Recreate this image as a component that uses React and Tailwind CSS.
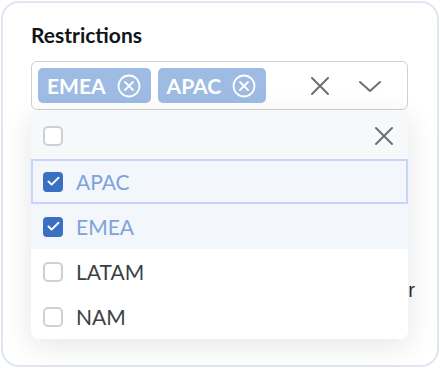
import { Check } from 'lucide-react';

const options = [
  { label: 'APAC', checked: true, active: true },
  { label: 'EMEA', checked: true },
  { label: 'LATAM', checked: false },
  { label: 'NAM', checked: false },
];

function Cross({ size = 20, stroke = 2, className = '' }) {
  return (
    <svg width={size} height={size} viewBox="0 0 20 20" className={className}>
      <path d="M2 2 L18 18 M18 2 L2 18" stroke="currentColor" strokeWidth={stroke} strokeLinecap="round" fill="none" />
    </svg>
  );
}

function Chevron() {
  return (
    <svg width="24" height="14" viewBox="0 0 24 14" className="text-[#6b6f76]">
      <path d="M2 3 L12 12 L22 3" stroke="currentColor" strokeWidth="2" strokeLinecap="round" strokeLinejoin="round" fill="none" />
    </svg>
  );
}

function CircleCross() {
  return (
    <svg width="24" height="24" viewBox="0 0 24 24" className="text-white">
      <circle cx="12" cy="12" r="10.5" stroke="currentColor" strokeWidth="1.8" fill="none" />
      <path d="M8 8 L16 16 M16 8 L8 16" stroke="currentColor" strokeWidth="1.8" strokeLinecap="round" fill="none" />
    </svg>
  );
}

function Chip({ label }) {
  return (
    <span className="h-[35px] pl-[9px] pr-[10px] rounded-[5px] bg-[#9dbbe3] inline-flex items-center gap-[11px] text-white font-bold text-[21px]">
      {label}
      <CircleCross />
    </span>
  );
}

function Box({ checked }) {
  if (checked) {
    return (
      <span className="w-[20px] h-[20px] rounded-[4px] bg-[#3a6fc1] flex items-center justify-center">
        <Check size={15} strokeWidth={3} className="text-white" />
      </span>
    );
  }
  return <span className="w-[20px] h-[20px] rounded-[5px] border-2 border-[#cdd1d6] bg-white" />;
}

export default function App() {
  return (
    <div className="w-[440px] h-[368px] bg-white pt-px pl-px" style={{ fontFamily: 'Lato, "Noto Sans", sans-serif' }}>
      <div className="w-[438px] h-[366px] rounded-[18px] border-2 border-[#dfe7f0] bg-white pl-[28px] pt-[19px]">
        <h2 className="font-bold text-[21px] leading-[26px] text-[#111418]">Restrictions</h2>
        <div className="relative mt-[13px] w-[377px]">
          <div className="h-[49px] rounded-[6px] border border-[#cfd0d6] flex items-center pl-[6px] pr-[25px] gap-[7px]">
            <Chip label="EMEA" />
            <Chip label="APAC" />
            <div className="ml-auto flex items-center gap-[28px] text-[#6b6f76]">
              <Cross size={20} stroke={2} />
              <Chevron />
            </div>
          </div>

          <div className="mt-[168px] flex justify-end text-[20px] leading-[24px] text-[#2a2d31]" style={{ fontFamily: '"Liberation Sans", sans-serif' }}>
            <span className="-mr-[7px]">Other</span>
          </div>

          <div className="absolute left-0 top-[52px] w-[377px] rounded-b-[8px] bg-white shadow-[0_6px_28px_rgba(30,40,60,0.12)] overflow-hidden">
            <div className="h-[46px] bg-[#f7f8fa] flex items-center pl-[12px] pr-[14px]">
              <Box checked={false} />
              <Cross size={20} stroke={2} className="ml-auto text-[#6b6f76]" />
            </div>
            {options.map((o) => (
              <div
                key={o.label}
                className={`h-[45px] flex items-center gap-[13px] text-[21px] ${o.active ? 'border-2 border-[#c9d4fa] pl-[10px] bg-[#f3f6fb]' : o.checked ? 'pl-[12px] bg-[#f3f6fb]' : 'pl-[12px] bg-white'} ${o.checked ? 'text-[#7ea2dc]' : 'text-[#3c3f44]'}`}
              >
                <Box checked={o.checked} />
                <span>{o.label}</span>
              </div>
            ))}
          </div>
        </div>
      </div>
    </div>
  );
}
